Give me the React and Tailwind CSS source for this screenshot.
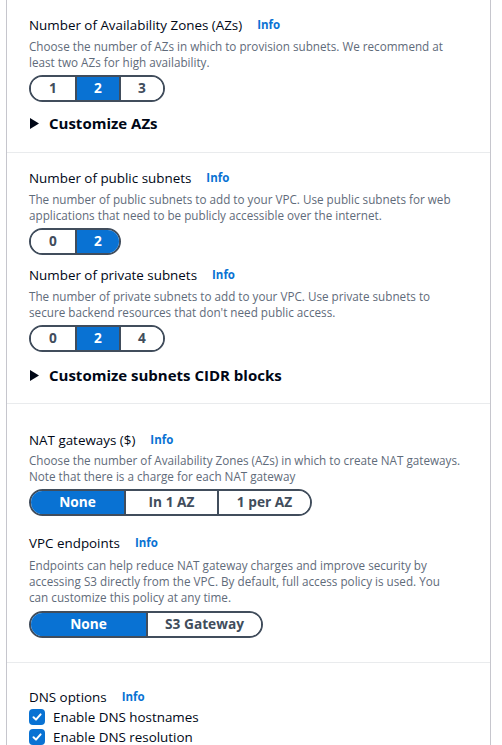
import React from 'react'

const font = { fontFamily: '"Open Sans", "Noto Sans", sans-serif' }

function Label({ children, className = '' }) {
  return (
    <div className={`flex items-center gap-[15px] h-5 ${className}`}>
      <span className="text-[13.4px] leading-5 text-[#000716]">{children}</span>
      <span className="text-[11.5px] leading-5 font-bold text-[#0972d3]">Info</span>
    </div>
  )
}

function Desc({ children, className = '' }) {
  return <p className={`text-[11.7px] leading-4 text-[#5f6b7a] ${className}`}>{children}</p>
}

function Segmented({ options, selected, w, className = '' }) {
  return (
    <div className={`flex w-fit h-[27px] border-2 border-[#414d5c] rounded-full overflow-hidden ${className}`}>
      {options.map((o, i) => (
        <div
          key={o}
          className={`${w} flex items-center justify-center text-[13.7px] font-bold ${i > 0 ? 'border-l-2 border-[#414d5c]' : ''} ${
            i === selected ? 'bg-[#0972d3] text-white' : 'bg-white text-[#414d5c]'
          }`}
        >
          {o}
        </div>
      ))}
    </div>
  )
}

function Expander({ children, className = '' }) {
  return (
    <div className={`flex items-center gap-[10px] h-[22px] ${className}`}>
      <svg width="9" height="11" viewBox="0 0 9 11" className="ml-px">
        <path d="M0 0 L9 5.5 L0 11 Z" fill="#000716" />
      </svg>
      <span className="text-[15px] leading-[22px] font-bold text-[#000716]">{children}</span>
    </div>
  )
}

function Check({ children }) {
  return (
    <div className="flex items-center gap-2 h-5">
      <div className="w-4 h-4 rounded-[4px] bg-[#0972d3] flex items-center justify-center">
        <svg width="12" height="12" viewBox="0 0 12 12">
          <path d="M2.5 6.2 L5 8.6 L9.6 3.4" stroke="white" strokeWidth="2" fill="none" strokeLinecap="round" strokeLinejoin="round" />
        </svg>
      </div>
      <span className="text-[13.4px] leading-5 text-[#000716]">{children}</span>
    </div>
  )
}

export default function App() {
  return (
    <div className="min-h-screen bg-white" style={font}>
      <div className="ml-[6px] w-[485px] border-x border-[#c6c6cd] min-h-[745px]">
        <section className="pl-[22px] pr-[29px] pt-[15px] pb-[18px] border-b border-[#e9ebed]">
          <Label>Number of Availability Zones (AZs)</Label>
          <Desc className="mt-[3px]">
            Choose the number of AZs in which to provision subnets. We recommend at least two AZs for high availability.
          </Desc>
          <Segmented className="mt-[5px]" options={['1', '2', '3']} selected={1} w="w-[44px]" />
          <Expander className="mt-[10px]">Customize AZs</Expander>
        </section>

        <section className="pl-[22px] pr-[29px] pt-[15px] pb-[17px] border-b border-[#e9ebed]">
          <Label>Number of public subnets</Label>
          <Desc className="mt-[3px]">
            The number of public subnets to add to your VPC. Use public subnets for web applications that need to be publicly accessible over the internet.
          </Desc>
          <Segmented className="mt-[5px]" options={['0', '2']} selected={1} w="w-[44px]" />
          <Label className="mt-[10px]">Number of private subnets</Label>
          <Desc className="mt-[3px]">
            The number of private subnets to add to your VPC. Use private subnets to secure backend resources that don't need public access.
          </Desc>
          <Segmented className="mt-[5px]" options={['0', '2', '4']} selected={1} w="w-[44px]" />
          <Expander className="mt-[12px]">Customize subnets CIDR blocks</Expander>
        </section>

        <section className="pl-[22px] pr-[29px] pt-[26px] pb-[24px] border-b border-[#e9ebed]">
          <Label>NAT gateways ($)</Label>
          <Desc className="mt-[2px]">
            Choose the number of Availability Zones (AZs) in which to create NAT gateways. Note that there is a charge for each NAT gateway
          </Desc>
          <Segmented className="mt-[5px]" options={['None', 'In 1 AZ', '1 per AZ']} selected={0} w="w-[93px]" />
          <Label className="mt-[17px]">VPC endpoints</Label>
          <Desc className="mt-[4px]">
            Endpoints can help reduce NAT gateway charges and improve security by accessing S3 directly from the VPC. By default, full access policy is used. You can customize this policy at any time.
          </Desc>
          <Segmented className="mt-[6px]" options={['None', 'S3 Gateway']} selected={0} w="w-[115px]" />
        </section>

        <section className="pl-[22px] pr-[29px] pt-[24px]">
          <Label>DNS options</Label>
          <Check>Enable DNS hostnames</Check>
          <Check>Enable DNS resolution</Check>
        </section>
      </div>
    </div>
  )
}
